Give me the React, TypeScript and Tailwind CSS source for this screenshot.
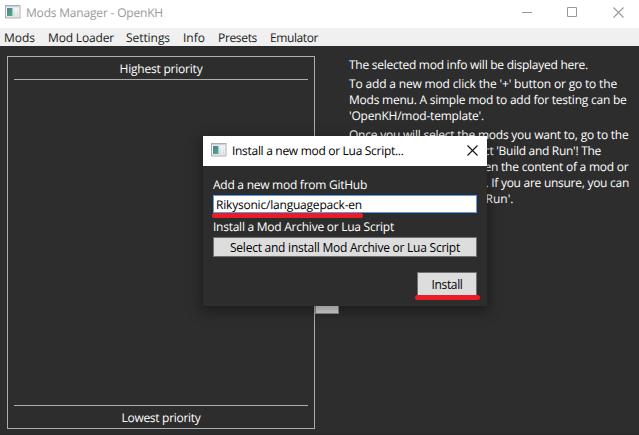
import { useLayoutEffect, useRef, useState } from 'react';

type FitProps = { text: string; width: number; className?: string };

/** One line of text whose tracking is adjusted so that it fills `width` pixels. */
function Fit({ text, width, className = '' }: FitProps) {
  const ref = useRef<HTMLSpanElement>(null);
  const [spacing, setSpacing] = useState(0);
  useLayoutEffect(() => {
    const natural = ref.current!.getBoundingClientRect().width;
    setSpacing((s) => s + (width - natural) / text.length);
  }, [text, width]);
  return (
    <span className={`block h-4 shrink-0 whitespace-pre ${className}`} style={{ width }}>
      <span ref={ref} className="inline-block" style={{ letterSpacing: spacing }}>
        {text}
      </span>
    </span>
  );
}

function AppIcon() {
  return (
    <svg width="16" height="14" viewBox="0 0 16 14" className="shrink-0">
      <defs>
        <linearGradient id="pane" x1="0" y1="0" x2="0.6" y2="1">
          <stop offset="0" stopColor="#4b7fa8" />
          <stop offset="1" stopColor="#55a478" />
        </linearGradient>
        <linearGradient id="strip" x1="0" y1="0" x2="0" y2="1">
          <stop offset="0" stopColor="#eef1f3" />
          <stop offset="1" stopColor="#cfdcd6" />
        </linearGradient>
      </defs>
      <rect x="0.5" y="0.5" width="14.5" height="12.5" fill="#fafbfb" stroke="#a9adb3" />
      <rect x="1" y="1" width="13.5" height="1.4" fill="#cdd2d9" />
      <rect x="2" y="3" width="5.5" height="8" fill="url(#pane)" />
      <rect x="8" y="3" width="2.5" height="8" fill="url(#strip)" />
      <rect x="11.5" y="3" width="2" height="8" fill="url(#strip)" />
      <path d="M1 12H14.5" stroke="#c9ccd1" />
    </svg>
  );
}

const menu = [
  { text: 'Mods', width: 31, gap: 'ml-1' },
  { text: 'Mod Loader', width: 66, gap: 'ml-[13px]' },
  { text: 'Settings', width: 44, gap: 'ml-3' },
  { text: 'Info', width: 22, gap: 'ml-[13px]' },
  { text: 'Presets', width: 39, gap: 'ml-[13px]' },
  { text: 'Emulator', width: 48, gap: 'ml-[13px]' },
];

function ModList() {
  return (
    <section className="ml-[7px] mt-[10px] flex h-[373px] w-[308px] shrink-0 flex-col border border-[#abadb3] px-1.5">
      <header className="flex h-[23px] justify-center border-b border-[#abadb3] pt-[3px]">
        <Fit text="Highest priority" width={83} />
      </header>
      <div className="flex-1" />
      <footer className="flex h-[23px] justify-center border-t border-[#abadb3] pt-[3px]">
        <Fit text="Lowest priority" width={79} />
      </footer>
    </section>
  );
}

function Description() {
  return (
    <article className="ml-2.5 mt-[10px] flex flex-col gap-[3px]">
      <Fit text="The selected mod info will be displayed here." width={239} />
      <div>
        <Fit text="To add a new mod click the '+' button or go to the" width={268} />
        <Fit text="Mods menu. A simple mod to add for testing can be" width={277.5} />
        <Fit text="'OpenKH/mod-template'." width={135} />
      </div>
      <div>
        <Fit text="Once you will select the mods you want to, go to the" width={279.5} />
        <Fit text="ct 'Build and Run'! The" width={117} className="ml-[135px]" />
        <Fit text="en the content of a mod or" width={144} className="ml-[135.5px]" />
        <Fit text=". If you are unsure, you can" width={143.5} className="ml-[136.5px]" />
        <Fit text="Run'." width={28} className="ml-[136.5px]" />
      </div>
    </article>
  );
}

function InstallDialog() {
  return (
    <div className="absolute left-[203px] top-[136px] h-[170px] w-[284px] bg-[#2d2d2d] text-white shadow-[0_4px_12px_2px_rgba(0,0,0,0.35)]">
      <header className="flex h-[30px] items-start bg-white text-black">
        <div className="ml-2 mt-[7px]"><AppIcon /></div>
        <Fit text="Install a new mod or Lua Script..." width={171.5} className="ml-[5px] mt-1.5" />
        <svg width="11" height="11" viewBox="0 0 11 11" className="ml-auto mr-[9px] mt-[9px]">
          <path d="M.5 .5L10.5 10.5M10.5 .5L.5 10.5" stroke="#111" strokeWidth="1.1" />
        </svg>
      </header>
      <div className="flex flex-col px-2.5 pt-2.5">
        <Fit text="Add a new mod from GitHub" width={154} />
        <div className="mt-[3px] h-[18px] border border-[#569de5] bg-white pl-0.5 text-black">
          <Fit text="Rikysonic/languagepack-en" width={146} />
        </div>
        <Fit text="Install a Mod Archive or Lua Script" width={181} className="mt-[5px]" />
        <button className="mt-[3px] flex h-5 justify-center border border-[#707070] bg-[#dddddd] pt-px text-black">
          <Fit text="Select and install Mod Archive or Lua Script" width={230} />
        </button>
        <button className="mt-[15px] flex h-6 w-[60px] justify-center self-end border border-[#707070] bg-[#dddddd] pt-[3px] text-black">
          <Fit text="Install" width={31} />
        </button>
      </div>
      <div className="absolute left-[9px] top-[77px] h-[5px] w-[151px] rounded-full bg-[#ec1c24]" />
      <div className="absolute left-[212px] top-[159px] h-[5px] w-[65px] rounded-full bg-[#ec1c24]" />
    </div>
  );
}

export default function App() {
  return (
    <div className="relative flex h-[435px] w-[639px] flex-col overflow-hidden bg-[#2d2d2d] font-['Open_Sans','Noto_Sans',sans-serif] text-[12px] leading-[18px] text-white [text-rendering:geometricPrecision]">
      <header className="flex h-7 shrink-0 bg-white text-[#999]">
        <div className="ml-[5px] mt-[5px]"><AppIcon /></div>
        <Fit text="Mods Manager - OpenKH" width={137} className="ml-[5px] mt-1" />
        <svg width="102" height="11" viewBox="0 0 102 11" className="ml-auto mr-[15px] mt-[7px]" fill="none" stroke="#999">
          <path d="M0 5.5H10" />
          <path d="M45.5 .5H54.5V9.5H45.5Z" />
          <path d="M91.5 .5L101.5 10.5M101.5 .5L91.5 10.5" strokeWidth="1.1" />
        </svg>
      </header>
      <nav className="flex h-[18px] shrink-0 bg-[#f0f0f0] pt-px text-[#212121]">
        {menu.map((m) => (
          <Fit key={m.text} text={m.text} width={m.width} className={m.gap} />
        ))}
      </nav>
      <main className="flex flex-1">
        <ModList />
        <div className="mt-[244px] h-6 w-6 shrink-0 border border-[#8f8f8f] bg-[#dddddd]" />
        <Description />
      </main>
      <div className="h-0.5 shrink-0 bg-[#292929]" />
      <InstallDialog />
    </div>
  );
}
